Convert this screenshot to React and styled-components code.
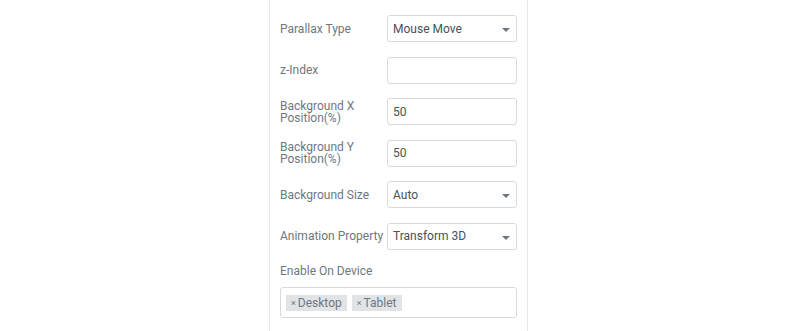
import React from 'react';
import styled, { createGlobalStyle } from 'styled-components';

const GlobalStyle = createGlobalStyle`
  html, body {
    margin: 0;
    padding: 0;
    background: #fff;
    font-family: Roboto, "Liberation Sans", Arial, sans-serif;
  }
`;

const Panel = styled.div`
  width: 259px;
  height: 331px;
  margin-left: 269px;
  padding: 15px 10px 0;
  box-sizing: border-box;
  border-left: 1px solid #e6e9ec;
  border-right: 1px solid #e6e9ec;
  display: flex;
  flex-direction: column;
  gap: 14.5px;
`;

const Row = styled.div`
  display: grid;
  grid-template-columns: 107px 130px;
  align-items: center;
  height: 27px;
`;

const Label = styled.label`
  font-size: 12px;
  line-height: 12px;
  color: #6d7882;
`;

const Field = styled.div`
  position: relative;
  height: 27px;
  box-sizing: border-box;
  border: 1px solid #d5dadf;
  border-radius: 3px;
  display: flex;
  align-items: center;
  padding: 0 5px;
  font-size: 12px;
  color: #495157;
`;

const Caret = styled.span`
  position: absolute;
  right: 6px;
  top: 12px;
  width: 0;
  height: 0;
  border-left: 4px solid transparent;
  border-right: 4px solid transparent;
  border-top: 4px solid #6d7882;
`;

const Block = styled.div`
  display: flex;
  flex-direction: column;
  gap: 10px;
  margin-top: 1px;
`;

const MultiBox = styled.div`
  height: 31px;
  box-sizing: border-box;
  border: 1px solid #d5dadf;
  border-radius: 3px;
  display: flex;
  align-items: center;
  gap: 5px;
  padding: 0 5px;
`;

const Tag = styled.span`
  background: #e2e3e5;
  color: #6d7882;
  font-size: 12px;
  line-height: 16px;
  padding: 0 5px;
  display: inline-flex;
  align-items: center;
`;

const TagX = styled.span`
  font-size: 9px;
  margin-right: 2px;
`;

const SelectRow = ({ label, value }) => (
  <Row>
    <Label>{label}</Label>
    <Field>
      {value}
      <Caret />
    </Field>
  </Row>
);

const InputRow = ({ label, value }) => (
  <Row>
    <Label>{label}</Label>
    <Field>{value}</Field>
  </Row>
);

const App = () => (
  <>
    <GlobalStyle />
    <Panel>
      <SelectRow label="Parallax Type" value="Mouse Move" />
      <InputRow label="z-Index" value="" />
      <InputRow label={<>Background X<br />Position(%)</>} value="50" />
      <InputRow label={<>Background Y<br />Position(%)</>} value="50" />
      <SelectRow label="Background Size" value="Auto" />
      <SelectRow label="Animation Property" value="Transform 3D" />
      <Block>
        <Label>Enable On Device</Label>
        <MultiBox>
          <Tag><TagX>×</TagX>Desktop</Tag>
          <Tag><TagX>×</TagX>Tablet</Tag>
        </MultiBox>
      </Block>
    </Panel>
  </>
);

export default App;
